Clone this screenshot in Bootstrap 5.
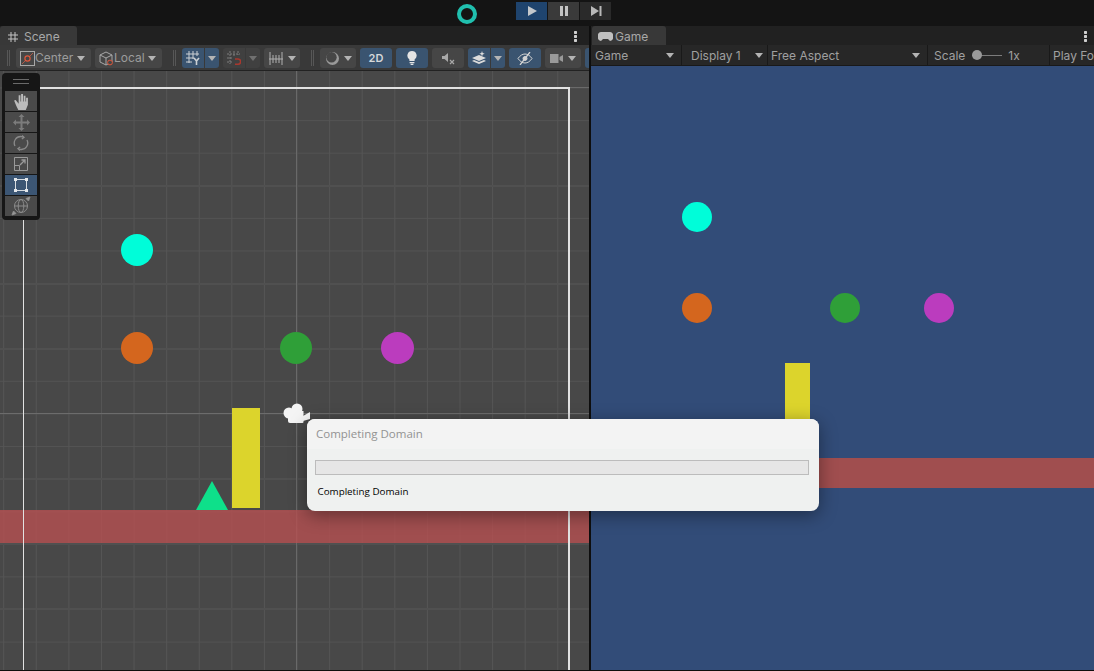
<!DOCTYPE html>
<html lang="en">
<head>
    <meta charset="UTF-8">
    <title>Unity Editor</title>
    <link href="https://cdn.jsdelivr.net/npm/bootstrap@5.3.0/dist/css/bootstrap.min.css" rel="stylesheet">
    <script src="https://cdn.jsdelivr.net/npm/bootstrap@5.3.0/dist/js/bootstrap.bundle.min.js"></script>
    <style>
        html, body { height: 100%; overflow: hidden; }
        body { background: #0e0e0e; font-family: Inter, "Liberation Sans", sans-serif; font-size: 12px; color: #a4a4a4; position: relative; }

        /* top bar */
        .top-bar { height: 26px; background: #141414; padding-top: 2px; position: relative; }
        .spinner-ring { position: absolute; left: 457px; top: 4px; width: 20px; height: 20px; border: 4px solid #20bfae; border-radius: 50%; }
        .play-group { margin-left: 516px; }
        .play-btn { width: 31px; height: 18px; display: flex; align-items: center; justify-content: center; margin-right: 1px; }
        .play-on { background: #1f446e; }
        .play-mid { background: #3a3a3a; }
        .play-off { background: #2a2a2a; }

        .panels { height: 645px; }
        .scene-panel { width: 589px; }
        .game-panel { width: 503px; margin-left: 2px; }

        /* tabs */
        .tab-row { height: 19px; background: #212121; position: relative; }
        .tab-item { height: 19px; background: #383838; border-radius: 3px 3px 0 0; display: flex; align-items: center; color: #a8a8a8; font-size: 12px; padding-top: 2px; }
        .scene-tab { width: 77px; padding-left: 8px; gap: 6px; }
        .game-tab { width: 74px; padding-left: 6px; gap: 2px; margin-left: 1px; }
        .kebab { position: absolute; top: 5px; width: 3px; height: 11px; background: radial-gradient(circle at 1.5px 1.5px, #d0d0d0 1.4px, transparent 1.5px) 0 0 / 3px 4px; }
        .kebab-scene { right: 12px; }
        .kebab-game { right: 7px; }

        /* scene toolbar */
        .scene-tools { height: 26px; background: #393939; border-bottom: 1px solid #222; padding-top: 3px; overflow: hidden; }
        .grip { width: 3px; height: 16px; border-left: 1px solid #575757; border-right: 1px solid #575757; margin-top: 2px; flex: none; }
        .tool-btn { height: 20px; background: #464646; border-radius: 3px; display: flex; align-items: center; justify-content: center; flex: none; color: #9c9c9c; }
        .tool-on { background: #3a5470; }
        .tool-dim { background: #404040; }
        .split-left { border-radius: 3px 0 0 3px; width: 22px; }
        .split-right { border-radius: 0 3px 3px 0; width: 14px; margin-left: 1px; }
        .caret-down { width: 0; height: 0; border-left: 4px solid transparent; border-right: 4px solid transparent; border-top: 5px solid #b4b4b4; flex: none; }
        .caret-dim { border-top-color: #707070; }
        .caret-end { margin-left: auto; margin-right: 6px; }

        /* scene canvas */
        .scene-view {
            height: 599px; position: relative; overflow: hidden; background-color: #484848;
            background-image:
                linear-gradient(to right, #555 1px, transparent 1px),
                linear-gradient(to bottom, #535353 1px, transparent 1px);
            background-size: 32.6px 32.6px;
            background-position: 3.2px 16.5px;
        }
        .axis-v { position: absolute; left: 296px; top: 0; bottom: 0; width: 1px; background: #696969; }
        .axis-h { position: absolute; top: 342px; left: 0; right: 0; height: 1px; background: #6c6c6c; }
        .major-h { position: absolute; left: 0; right: 0; height: 2px; background: #505050; }
        .frame-tail { position: absolute; left: 569px; right: 0; top: 16px; height: 1px; background: #6a6a6a; }
        .cam-frame { position: absolute; left: 23px; top: 16px; width: 547px; height: 700px; border: 2px solid #e2e2e2; border-width: 2px 2px 2px 1px; }
        .shape { position: absolute; }
        .dot { position: absolute; border-radius: 50%; }
        .c-cyan { background: #00fdd9; }
        .c-orange { background: #d4661e; }
        .c-green { background: #2f9f38; }
        .c-purple { background: #bb3cbe; }
        .c-yellow { background: #dcd42c; }
        .c-red { background: #a04e4f; }
        .c-red-glass { background: rgba(182, 80, 81, .8); }

        /* toolbox overlay */
        .toolbox { position: absolute; left: 2px; top: 2px; width: 38px; height: 147px; background: #161616; border-radius: 4px; padding: 18px 3px 0; z-index: 2; }
        .toolbox-head { position: absolute; left: 11px; top: 6px; width: 16px; height: 5px; border-top: 1px solid #6a6a6a; border-bottom: 1px solid #6a6a6a; }
        .box-btn { height: 20px; margin-bottom: 1px; background: #4a4a4a; display: flex; align-items: center; justify-content: center; }
        .box-on { background: #3c5674; }

        /* game panel */
        .game-tools { height: 21px; background: #272727; border-bottom: 1px solid #191919; overflow: hidden; white-space: nowrap; }
        .game-cell { height: 20px; border-right: 1px solid #191919; display: flex; align-items: center; justify-content: space-between; flex: none; padding-right: 7px; padding-top: 1px; color: #a0a0a0; }
        .slider-track { width: 30px; height: 1px; background: #7c7c7c; position: relative; margin: 0 6px 0 0; }
        .slider-knob { position: absolute; left: 0; top: -5px; width: 10px; height: 10px; border-radius: 50%; background: #9a9a9a; }
        .game-view { height: 604px; position: relative; overflow: hidden; background: #324c78; }

        /* progress dialog */
        .domain-dialog { position: absolute; left: 307px; top: 419px; width: 512px; height: 92px; background: #eff1f0; border-radius: 8px; box-shadow: 0 4px 18px rgba(0,0,0,.4); z-index: 5; overflow: hidden; font-family: "Open Sans", "Liberation Sans", sans-serif; }
        .dialog-title { height: 30px; background: #f3f3f3; color: #929292; font-size: 11.5px; padding: 7px 0 0 9px; line-height: 16px; }
        .dialog-bar { height: 15px; margin: 11px 10px 0 8px; background: #e6e6e6; border: 1px solid #bcbcbc; }
        .dialog-status { color: #000; font-size: 9.8px; line-height: 14px; padding: 10px 0 0 10.500px; }
    </style>
</head>

<body>

    <!-- Top bar -->
    <div class="top-bar">
        <div class="spinner-ring"></div>
        <div class="d-flex play-group">
            <div class="play-btn play-on"><svg width="12" height="12" viewBox="0 0 12 12"><path d="M2 1l9 5-9 5z" fill="#c4c8cc"/></svg></div>
            <div class="play-btn play-mid"><svg width="12" height="12" viewBox="0 0 12 12"><path d="M2 1h3v10H2zM7 1h3v10H7z" fill="#c4c4c4"/></svg></div>
            <div class="play-btn play-off"><svg width="12" height="12" viewBox="0 0 12 12"><path d="M1 1l8 5-8 5z M9.500 1H11.500V11H9.500z" fill="#b8b8b8"/></svg></div>
        </div>
    </div>

    <div class="d-flex panels">
        <!-- Scene panel -->
        <div class="scene-panel">
            <div class="tab-row">
                <div class="tab-item scene-tab">
                    <svg width="10" height="10" viewBox="0 0 10 10" fill="none" stroke="#c4c4c4"><path d="M3 0v10M7 0v10M0 3h10M0 7h10"/></svg>
                    <span>Scene</span>
                </div>
                <div class="kebab kebab-scene"></div>
            </div>
            <div class="scene-tools d-flex">
                <div class="grip" style="margin-left:7px"></div>
                <div class="tool-btn" style="width:75px;margin-left:6px;justify-content:flex-start;padding-left:4px">
                    <svg width="15" height="15" viewBox="0 0 15 15" fill="none"><rect x=".5" y=".5" width="14" height="14" stroke="#a8a8a8"/><path d="M2 13L13 2" stroke="#b05a48"/><circle cx="7.500" cy="7.500" r="2.600" stroke="#e0583c" stroke-width="1.200" fill="#464646"/></svg>
                    <span>Center</span>
                    <span class="caret-down caret-end"></span>
                </div>
                <div class="tool-btn" style="width:67px;margin-left:4px;justify-content:flex-start;padding-left:4px">
                    <svg width="15" height="15" viewBox="0 0 15 15" fill="none" stroke="#a8a8a8"><path d="M1 4l6-3 6 3v7l-6 3-6-3zM1 4l6 3 6-3M7 7v7"/><circle cx="11" cy="11.500" r="2.400" stroke="#e0583c" fill="#464646"/></svg>
                    <span>Local</span>
                    <span class="caret-down caret-end"></span>
                </div>
                <div class="grip" style="margin-left:11px"></div>
                <div class="tool-btn tool-on split-left" style="margin-left:6px">
                    <svg width="14" height="14" viewBox="0 0 14 14" fill="none" stroke="#ccd0d4"><path d="M3 0v12M7 0v8M11 0v5M0 3h13M0 7h8M0 11h6"/><path d="M8 7l2.500 3L13 7M10.500 10v4" stroke-width="1.600"/></svg>
                </div>
                <div class="tool-btn tool-on split-right"><span class="caret-down"></span></div>
                <div class="tool-btn tool-dim split-left" style="margin-left:4px">
                    <svg width="14" height="14" viewBox="0 0 14 14" fill="none"><path d="M3 0v13M7 0v6M11 0v4M0 3h13M0 7h6M0 11h5" stroke="#7c7c7c" stroke-dasharray="2 1"/><path d="M8 8h3a2.600 2.600 0 010 5.200H8" stroke="#a8382e" stroke-width="1.500"/></svg>
                </div>
                <div class="tool-btn tool-dim split-right"><span class="caret-down caret-dim"></span></div>
                <div class="tool-btn" style="width:36px;margin-left:4px;gap:5px">
                    <svg width="14" height="13" viewBox="0 0 14 13" fill="none" stroke="#b0b0b0"><path d="M1 0v13M13 0v13M4 3v8M7 3v8M10 3v8M0 7h14"/></svg>
                    <span class="caret-down"></span>
                </div>
                <div class="grip" style="margin-left:11px"></div>
                <div class="tool-btn" style="width:36px;margin-left:6px;gap:4px">
                    <svg width="15" height="15" viewBox="0 0 15 15"><circle cx="7.500" cy="7.500" r="6.500" fill="#9a9a9a"/><circle cx="6.500" cy="6.200" r="5.200" fill="#464646"/></svg>
                    <span class="caret-down"></span>
                </div>
                <div class="tool-btn tool-on fw-semibold" style="width:32px;margin-left:4px;font-size:11px;color:#d6d8da">2D</div>
                <div class="tool-btn tool-on" style="width:32px;margin-left:4px">
                    <svg width="12" height="14" viewBox="0 0 12 14"><path d="M6 0a4.600 4.600 0 00-2.600 8.400V10h5.200V8.400A4.600 4.600 0 006 0z M3.600 11h4.800v1.200H3.600z M4.600 12.800h2.800V14H4.600z" fill="#e4e4e4"/></svg>
                </div>
                <div class="tool-btn" style="width:32px;margin-left:4px">
                    <svg width="13" height="13" viewBox="0 0 13 13"><path d="M0 4h2.500L6 1v9L2.500 7H0z" fill="#a8a8a8"/><path d="M8 8l4 4M12 8l-4 4" stroke="#a8a8a8" stroke-width="1.200"/></svg>
                </div>
                <div class="tool-btn tool-on split-left" style="margin-left:4px">
                    <svg width="16" height="14" viewBox="0 0 16 14"><path d="M1 7l7-3 7 3-7 3zM1 10l7 3 7-3-2-1-5 2-5-2z" fill="#dcdcdc"/><path d="M11 0l.7 2 2 .7-2 .7-.7 2-.7-2-2-.7 2-.7z" fill="#dcdcdc"/></svg>
                </div>
                <div class="tool-btn tool-on split-right"><span class="caret-down"></span></div>
                <div class="tool-btn tool-on" style="width:32px;margin-left:4px">
                    <svg width="16" height="13" viewBox="0 0 16 13" fill="none" stroke="#d4d4d4"><path d="M1 6.500C3 3.500 5.500 2 8 2s5 1.500 7 4.500C13 9.500 10.500 11 8 11S3 9.500 1 6.500z"/><circle cx="8" cy="6.500" r="2" fill="#d4d4d4"/><path d="M13 0L3 13" stroke-width="1.300"/></svg>
                </div>
                <div class="tool-btn" style="width:36px;margin-left:4px;gap:5px">
                    <svg width="13" height="9" viewBox="0 0 13 9"><path d="M0 0h8.500v9H0zM9.500 3L13 1v7L9.500 6z" fill="#9a9a9a"/></svg>
                    <span class="caret-down"></span>
                </div>
                <div class="tool-btn tool-on" style="width:32px;margin-left:4px"></div>
            </div>
            <div class="scene-view">
                <div class="major-h" style="top:114px"></div>
                <div class="major-h" style="top:212px"></div>
                <div class="major-h" style="top:277px"></div>
                <div class="major-h" style="top:407px"></div>
                <div class="major-h" style="top:472px"></div>
                <div class="major-h" style="top:537px"></div>
                <div class="axis-v"></div>
                <div class="axis-h"></div>
                <div class="frame-tail"></div>

                <div class="toolbox">
                    <div class="toolbox-head"></div>
                    <div class="box-btn">
                        <svg width="16" height="17" viewBox="0 0 15 16"><path d="M1 7l2 5 2 4h7l2-5V4.500h-1.700V8h-.6V2.500H10V8h-.6V1H7.600v7H7V2H5.300v8L2.500 6.500z" fill="#bcbcbc"/></svg>
                    </div>
                    <div class="box-btn">
                        <svg width="17" height="17" viewBox="0 0 17 17" fill="#7c7c7c"><path d="M8.500 0l3 3h-2v4.500H14v-2l3 3-3 3v-2H9.500V14h2l-3 3-3-3h2V9.500H3v2l-3-3 3-3v2h4.500V3h-2z"/></svg>
                    </div>
                    <div class="box-btn">
                        <svg width="16" height="16" viewBox="0 0 16 16" fill="none" stroke="#8a8a8a" stroke-width="1.300"><path d="M2 11A6.500 6.500 0 018 1.500c1 0 2 .2 2.800.7M14 5a6.500 6.500 0 01-6 9.500c-1 0-2-.2-2.800-.7"/><path d="M9 .5l2 2-2.200 1.500M7 15.500l-2-2 2.200-1.500"/></svg>
                    </div>
                    <div class="box-btn">
                        <svg width="14" height="14" viewBox="0 0 14 14" fill="none" stroke="#9a9a9a"><path d="M.5.500h13v13H.500z"/><path d="M.500 8.500h5v5" /><path d="M6 8l5-5M7.500 3H11v3.500" stroke-width="1.300"/></svg>
                    </div>
                    <div class="box-btn box-on">
                        <svg width="14" height="14" viewBox="0 0 14 14" fill="none"><path d="M1.500 1.500h11v11h-11z" stroke="#d8dde2"/><path d="M0 0h3v3H0zM11 0h3v3h-3zM0 11h3v3H0zM11 11h3v3h-3z" fill="#e4e8ec"/></svg>
                    </div>
                    <div class="box-btn">
                        <svg width="20" height="20" viewBox="0 0 20 20" fill="none" stroke="#8c8c8c"><circle cx="10" cy="10" r="6.500"/><ellipse cx="10" cy="10" rx="2.800" ry="6.500"/><path d="M3.500 10h13"/><path d="M1 19l4-1.500-2.500-2.500zM19 1l-4 1.500 2.500 2.500z" fill="#9a9a9a"/></svg>
                    </div>
                </div>

                <div class="dot c-cyan" style="left:121px;top:163px;width:32px;height:32px"></div>
                <div class="dot c-orange" style="left:121px;top:261px;width:32px;height:32px"></div>
                <div class="dot c-green" style="left:280px;top:261px;width:32px;height:32px"></div>
                <div class="dot c-purple" style="left:381px;top:261px;width:33px;height:32px"></div>
                <div class="shape c-yellow" style="left:232px;top:337px;width:28px;height:100px"></div>
                <div class="shape c-red-glass" style="left:0;top:439px;width:589px;height:33px"></div>
                <div class="cam-frame"></div>
                <svg class="shape" style="left:196px;top:410px" width="32" height="29" viewBox="0 0 32 29"><path d="M16 0l16 29H0z" fill="#0ee08a"/></svg>
                <svg class="shape" style="left:283px;top:332px" width="28" height="21" viewBox="0 0 28 21"><circle cx="14" cy="6" r="5.500" fill="#f4f4f4"/><circle cx="6" cy="10" r="5.500" fill="#f4f4f4"/><path d="M5 8h15.500v11a1 1 0 01-1 1H7a2 2 0 01-2-2z" fill="#f4f4f4"/><path d="M20 13l7-4v7l-7 2z" fill="#f4f4f4"/></svg>
            </div>
        </div>

        <!-- Game panel -->
        <div class="game-panel">
            <div class="tab-row">
                <div class="tab-item game-tab">
                    <svg width="15" height="9" viewBox="0 0 15 9"><path d="M3.500 0h8a3.500 3.500 0 013.500 4.500 3.500 3.500 0 01-3 4.500L10 7H5L3 9a3.500 3.500 0 01-3-4.500A3.500 3.500 0 013.500 0z" fill="#c0c0c0"/></svg>
                    <span>Game</span>
                </div>
                <div class="kebab kebab-game"></div>
            </div>
            <div class="game-tools d-flex">
                <div class="game-cell ps-1" style="width:91px"><span>Game</span><span class="caret-down"></span></div>
                <div class="game-cell" style="width:86px;padding-left:9px;padding-right:4px"><span>Display 1</span><span class="caret-down"></span></div>
                <div class="game-cell" style="width:160px;padding-left:3px"><span>Free Aspect</span><span class="caret-down"></span></div>
                <div class="game-cell" style="width:122px;padding-left:6px;justify-content:flex-start">
                    <span style="margin-right:7px">Scale</span>
                    <div class="slider-track"><div class="slider-knob"></div></div>
                    <span>1x</span>
                </div>
                <div class="game-cell" style="padding-left:3px;padding-right:0;border-right:0"><span>Play Fo</span></div>
            </div>
            <div class="game-view">
                <div class="dot c-cyan" style="left:91px;top:136px;width:30px;height:30px"></div>
                <div class="dot c-orange" style="left:91px;top:227px;width:30px;height:30px"></div>
                <div class="dot c-green" style="left:239px;top:227px;width:30px;height:30px"></div>
                <div class="dot c-purple" style="left:333px;top:227px;width:30px;height:30px"></div>
                <div class="shape c-yellow" style="left:194px;top:297px;width:25px;height:56px"></div>
                <div class="shape c-red" style="left:0;top:392px;width:503px;height:30px"></div>
            </div>
        </div>
    </div>

    <!-- Progress dialog -->
    <div class="domain-dialog">
        <div class="dialog-title">Completing Domain</div>
        <div class="dialog-bar"></div>
        <div class="dialog-status">Completing Domain</div>
    </div>

</body>

</html>
